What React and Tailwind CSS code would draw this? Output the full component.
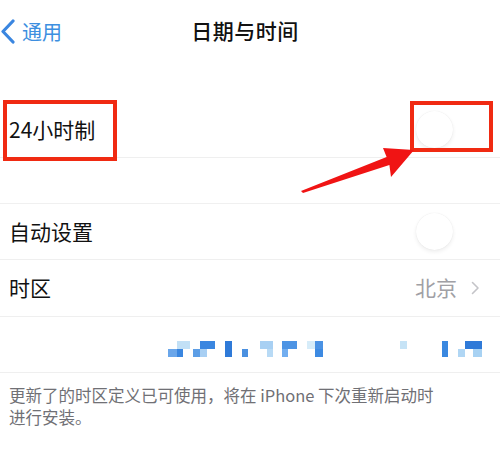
const cells = [
  [168, 1, 9, "#6aa6ea"],
  [177, 1, 6, "#3a86e0"],
  [177, 0, 13, "#c2e0f6"],
  [193, 1, 7, "#5c9ee6"],
  [200, 0, 15, "#3a86e0"],
  [200, 1, 7, "#a8cff3"],
  [225, 0, 7, "#2f7ad8"],
  [225, 1, 7, "#2f7ad8"],
  [242, 1, 6, "#4a90e0"],
  [260, 0, 13, "#a8d0f3"],
  [267, 1, 6, "#b8daf5"],
  [282, 0, 15, "#4d94e4"],
  [282, 1, 6, "#72aef0"],
  [307, 0, 8, "#d6ecf9"],
  [315, 0, 8, "#4a92e4"],
  [315, 1, 8, "#3d8ae2"],
  [400, 0, 7, "#c6e3f6"],
  [442, 0, 6, "#3a88e0"],
  [442, 1, 6, "#3a88e0"],
  [458, 1, 7, "#b0d6f4"],
  [465, 0, 17, "#2f7ad8"],
  [473, 1, 9, "#a8d2f3"],
];

function Knob() {
  return (
    <div className="mr-[25px] w-[37px] h-[37px] rounded-full bg-white shadow-[0_2px_4px_rgba(0,0,0,0.07),0_0_1px_rgba(0,0,0,0.1)]" />
  );
}

function Row({ label, children, className = "" }) {
  return (
    <div className={`flex items-center justify-between pl-[9px] pr-[22px] border-b border-[#efefef] ${className}`}>
      <span className="text-[21px] text-[#111]">{label}</span>
      {children}
    </div>
  );
}

export default function App() {
  return (
    <div className="relative w-[500px] h-[454px] bg-white overflow-hidden font-['Noto_Sans_CJK_SC','Liberation_Sans',sans-serif]">
      <div className="relative h-[62px] flex items-center justify-center">
        <div className="absolute left-0 top-[19px] flex items-center gap-[6px] text-[#3d8fe0]">
          <svg width="16" height="25" viewBox="0 0 16 25">
            <path d="M13 2 L3 12.5 L13 23" fill="none" stroke="#3a86e0" strokeWidth="3.2" strokeLinecap="round" strokeLinejoin="round" />
          </svg>
          <span className="text-[20px] leading-none">通用</span>
        </div>
        <span className="mr-[10px] text-[21px] font-medium text-[#111] tracking-[0.5px]">日期与时间</span>
      </div>

      <div className="h-[40px]" />

      <Row label="24小时制" className="h-[56px]">
        <Knob />
      </Row>

      <div className="h-[46px] border-b border-[#f0f0f0]" />

      <Row label="自动设置" className="h-[56px]">
        <Knob />
      </Row>

      <Row label="时区" className="h-[57px]">
        <div className="flex items-center gap-[14px] text-[#a0a0a5]">
          <span className="text-[21px]">北京</span>
          <svg width="9" height="14" viewBox="0 0 9 14" className="mr-[-2px]">
            <path d="M1.5 1.5 L7 7 L1.5 12.5" fill="none" stroke="#c4c4c8" strokeWidth="1.6" strokeLinecap="round" strokeLinejoin="round" />
          </svg>
        </div>
      </Row>

      <div className="h-[56px] border-b border-[#efefef]">
        <svg width="500" height="56" viewBox="0 0 500 56">
          {cells.map(([x, r, w, c], i) => (
            <rect key={i} x={x} y={24 + r * 8} width={w} height="8" fill={c} />
          ))}
        </svg>
      </div>

      <div className="pt-[11px] pl-[9px] pr-[40px] text-[16.5px] leading-[22px] text-[#707075]">
        更新了的时区定义已可使用，将在 iPhone 下次重新启动时
        <br />
        进行安装。
      </div>

      <div className="absolute left-[3px] top-[100px] w-[114px] h-[61px] border-[4px] border-[#f02a12]" />
      <div className="absolute left-[410px] top-[101px] w-[83px] h-[51px] border-[4px] border-[#f02a12]" />
      <svg className="absolute left-0 top-0" width="500" height="454" viewBox="0 0 500 454">
        <polygon points="301,191 386.6,157 383,148 414,150 391,177 389.4,165 303,193" fill="#f01414" />
      </svg>
    </div>
  );
}
